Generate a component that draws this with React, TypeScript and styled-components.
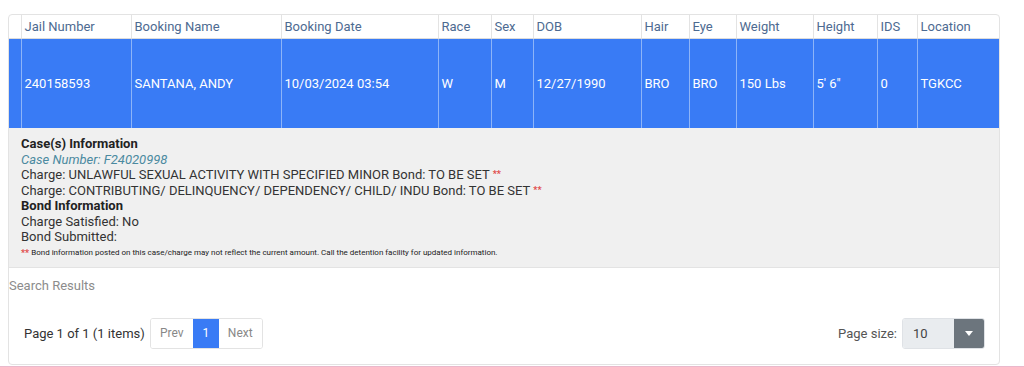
import React from "react";
import styled, { createGlobalStyle } from "styled-components";

const GlobalStyle = createGlobalStyle`
  html, body {
    margin: 0;
    padding: 0;
    background: #ffffff;
    font-family: Roboto, "Liberation Sans", Arial, sans-serif;
  }
`;

// 페이지 전체
const Page = styled.div`
  width: 1024px;
  height: 367px;
  padding: 14px 0 0 8px;
  box-sizing: border-box;
  border-bottom: 1px solid #eab8cc;
  overflow: hidden;
`;

// 그리드 카드
const Card = styled.div`
  width: 992px;
  height: 351px;
  box-sizing: border-box;
  border: 1px solid #e3e3e3;
  border-radius: 4px;
  display: flex;
  flex-direction: column;
`;

const Table = styled.table`
  border-collapse: collapse;
  table-layout: fixed;
  width: 990px;
  font-size: 13px;
`;

const HeadCell = styled.th<{ w: number }>`
  width: ${(p) => p.w}px;
  box-sizing: border-box;
  height: 23px;
  padding: 0 3px;
  text-align: left;
  font-weight: 400;
  color: #4d6a91;
  border-left: 1px solid #e3e3e3;
  border-bottom: 1px solid #dcdcdc;
  white-space: nowrap;
  overflow: hidden;
  &:first-child {
    border-left: none;
  }
`;

const SelectedRow = styled.tr`
  background: #397bf5;
`;

const BodyCell = styled.td`
  height: 90px;
  box-sizing: border-box;
  padding: 0 3px;
  color: #ffffff;
  border-left: 1px solid #8db4f8;
  white-space: nowrap;
  overflow: hidden;
  &:first-child {
    border-left: none;
  }
`;

const DetailCell = styled.td`
  background: #f0f0f0;
  padding: 8px 12px 8px 12px;
  border-bottom: 1px solid #e3e3e3;
  color: #333333;
  font-size: 13px;
  line-height: 15.5px;
`;

const Title = styled.div`
  font-weight: 700;
  color: #222222;
`;

const CaseNumber = styled.div`
  font-style: italic;
  color: #4b8aa0;
`;

const Line = styled.div``;

const Stars = styled.span`
  color: #e04848;
  font-size: 9px;
  vertical-align: top;
  font-weight: 700;
`;

const Note = styled.div`
  font-size: 8px;
  line-height: 12px;
  margin-top: 2px;
  color: #222222;
`;

const Caption = styled.div`
  color: #8c8c8c;
  font-size: 13px;
  padding: 10px 0 0 0;
  height: 28px;
`;

const Footer = styled.div`
  display: flex;
  align-items: center;
  justify-content: space-between;
  padding: 12px 14px 0 15px;
`;

const Pager = styled.div`
  display: flex;
  align-items: center;
  gap: 5px;
  font-size: 13px;
  color: #333333;
`;

const Buttons = styled.div`
  display: flex;
  border: 1px solid #e3e3e3;
  border-radius: 3px;
  height: 29px;
  overflow: hidden;
`;

const PageButton = styled.div<{ active?: boolean; w: number }>`
  width: ${(p) => p.w}px;
  display: flex;
  align-items: center;
  justify-content: center;
  font-size: 12px;
  background: ${(p) => (p.active ? "#397bf5" : "#ffffff")};
  color: ${(p) => (p.active ? "#ffffff" : "#888888")};
`;

const SizeBox = styled.div`
  display: flex;
  align-items: center;
  gap: 5px;
  font-size: 13px;
  color: #555555;
`;

const Select = styled.div`
  display: flex;
  height: 31px;
  width: 83px;
  border-radius: 3px;
  overflow: hidden;
  border: 1px solid #dfe2e6;
  box-sizing: border-box;
`;

const SelectValue = styled.div`
  flex: 1;
  background: #e9ecef;
  display: flex;
  align-items: center;
  padding-left: 10px;
  font-size: 13px;
  color: #444444;
`;

const SelectArrow = styled.div`
  width: 30px;
  background: #6c757d;
  display: flex;
  align-items: center;
  justify-content: center;
`;

const columns = [
  { title: "", w: 12 },
  { title: "Jail Number", w: 110 },
  { title: "Booking Name", w: 150 },
  { title: "Booking Date", w: 157 },
  { title: "Race", w: 53 },
  { title: "Sex", w: 42 },
  { title: "DOB", w: 108 },
  { title: "Hair", w: 48 },
  { title: "Eye", w: 47 },
  { title: "Weight", w: 77 },
  { title: "Height", w: 64 },
  { title: "IDS", w: 40 },
  { title: "Location", w: 82 },
];

const row = [
  "",
  "240158593",
  "SANTANA, ANDY",
  "10/03/2024 03:54",
  "W",
  "M",
  "12/27/1990",
  "BRO",
  "BRO",
  "150 Lbs",
  "5' 6\"",
  "0",
  "TGKCC",
];

export default function App() {
  return (
    <>
      <GlobalStyle />
      <Page>
        <Card>
          <Table>
            <thead>
              <tr>
                {columns.map((c, i) => (
                  <HeadCell key={i} w={c.w}>
                    {c.title}
                  </HeadCell>
                ))}
              </tr>
            </thead>
            <tbody>
              <SelectedRow>
                {row.map((v, i) => (
                  <BodyCell key={i}>{v}</BodyCell>
                ))}
              </SelectedRow>
              <tr>
                <DetailCell colSpan={columns.length}>
                  <Title>Case(s) Information</Title>
                  <CaseNumber>Case Number: F24020998</CaseNumber>
                  <Line>
                    Charge: UNLAWFUL SEXUAL ACTIVITY WITH SPECIFIED MINOR Bond: TO BE SET <Stars>**</Stars>
                  </Line>
                  <Line>
                    Charge: CONTRIBUTING/ DELINQUENCY/ DEPENDENCY/ CHILD/ INDU Bond: TO BE SET <Stars>**</Stars>
                  </Line>
                  <Title>Bond Information</Title>
                  <Line>Charge Satisfied: No</Line>
                  <Line>Bond Submitted:</Line>
                  <Note>
                    <Stars>**</Stars> Bond information posted on this case/charge may not reflect the current amount. Call the detention facility for updated information.
                  </Note>
                </DetailCell>
              </tr>
            </tbody>
          </Table>
          <Caption>Search Results</Caption>
          <Footer>
            <Pager>
              <span>Page 1 of 1 (1 items)</span>
              <Buttons>
                <PageButton w={42}>Prev</PageButton>
                <PageButton w={26} active>
                  1
                </PageButton>
                <PageButton w={43}>Next</PageButton>
              </Buttons>
            </Pager>
            <SizeBox>
              <span>Page size:</span>
              <Select>
                <SelectValue>10</SelectValue>
                <SelectArrow>
                  <svg width="8" height="5" viewBox="0 0 8 5">
                    <path d="M0 0 L8 0 L4 5 Z" fill="#ffffff" />
                  </svg>
                </SelectArrow>
              </Select>
            </SizeBox>
          </Footer>
        </Card>
      </Page>
    </>
  );
}
